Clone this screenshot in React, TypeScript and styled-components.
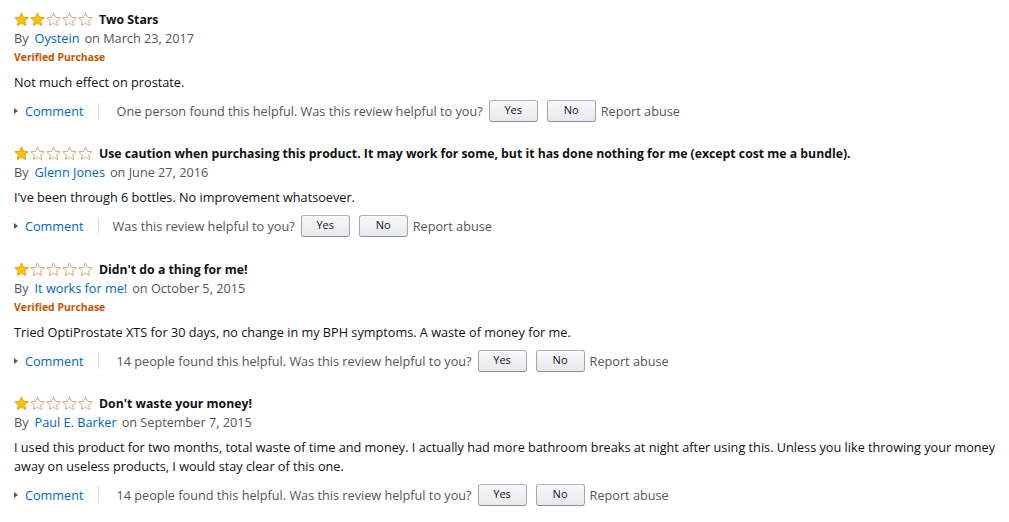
import React from "react";
import styled, { createGlobalStyle } from "styled-components";

const Global = createGlobalStyle`
  html, body { margin: 0; padding: 0; background: #fff; }
  body { font-family: "Open Sans", "Noto Sans", Arial, sans-serif; color: #111; font-size: 12.7px; }
`;

const Page = styled.div`
  padding: 10px 14px 0 14px;
  width: 990px;
`;

const Review = styled.div`
  margin-bottom: 22.3px;
`;

const Header = styled.div`
  display: flex;
  align-items: center;
  height: 19px;
`;

const Stars = styled.div`
  display: flex;
  gap: 1px;
  margin-right: 6px;
`;

const Title = styled.span`
  font-weight: 700;
  font-size: 12.25px;
  color: #111;
`;

const ByLine = styled.div`
  line-height: 19px;
  height: 19px;
  color: #555;
`;

const Author = styled.a`
  color: #0066c0;
  text-decoration: none;
  margin: 0 5px 0 6px;
`;

const Verified = styled.div`
  color: #c45500;
  font-weight: 700;
  font-size: 10.4px;
  line-height: 19px;
  height: 19px;
`;

const Body = styled.p`
  margin: 6px 0 0 0;
  line-height: 19px;
  color: #111;
`;

const Actions = styled.div`
  display: flex;
  align-items: center;
  height: 22px;
  margin-top: 8px;
  color: #555;
`;

const CommentLink = styled.a`
  display: flex;
  align-items: center;
  color: #0066c0;
  text-decoration: none;
`;

const Caret = styled.span`
  width: 0;
  height: 0;
  border-top: 3.5px solid transparent;
  border-bottom: 3.5px solid transparent;
  border-left: 4px solid #555;
  margin: 0 7px 0 0;
`;

const Sep = styled.span<{ $right: number }>`
  width: 1px;
  height: 17px;
  background: #ddd;
  margin: 0 ${(p) => p.$right}px 0 14px;
`;

const Button = styled.button<{ $ml: number }>`
  width: 49px;
  height: 22px;
  margin-left: ${(p) => p.$ml}px;
  border: 1px solid #adb1b8;
  border-color: #adb1b8 #a2a6ac #8d9096;
  border-radius: 3px;
  background: linear-gradient(to bottom, #f7f8fa, #e7e9ec);
  font-family: "Open Sans", "Noto Sans", Arial, sans-serif;
  font-size: 11px;
  line-height: 18px;
  color: #111;
  padding: 0 0 2px 0;
  box-shadow: 0 1px 0 rgba(255, 255, 255, 0.6) inset;
`;

const Report = styled.span`
  margin-left: 5px;
  color: #555;
`;

const Star: React.FC<{ filled: boolean }> = ({ filled }) => (
  <svg width="15" height="15" viewBox="0 0 24 24">
    <path
      d="M12 1.5l3.1 7 7.6.7-5.75 5 1.75 7.45L12 17.75 5.3 21.65l1.75-7.45L1.3 9.2l7.6-.7z"
      fill={filled ? "#ffc400" : "#fff"}
      stroke={filled ? "#e39400" : "#c8a46e"}
      strokeWidth="1.4"
      strokeLinejoin="round"
    />
  </svg>
);

type R = {
  stars: number;
  title: string;
  author: string;
  date: string;
  verified: boolean;
  body: string;
  helpful: string;
  sepRight: number;
};

const reviews: R[] = [
  {
    stars: 2,
    title: "Two Stars",
    author: "Oystein",
    date: "March 23, 2017",
    verified: true,
    body: "Not much effect on prostate.",
    helpful: "One person found this helpful. Was this review helpful to you?",
    sepRight: 18,
  },
  {
    stars: 1,
    title:
      "Use caution when purchasing this product. It may work for some, but it has done nothing for me (except cost me a bundle).",
    author: "Glenn Jones",
    date: "June 27, 2016",
    verified: false,
    body: "I've been through 6 bottles. No improvement whatsoever.",
    helpful: "Was this review helpful to you?",
    sepRight: 14,
  },
  {
    stars: 1,
    title: "Didn't do a thing for me!",
    author: "It works for me!",
    date: "October 5, 2015",
    verified: true,
    body: "Tried OptiProstate XTS for 30 days, no change in my BPH symptoms. A waste of money for me.",
    helpful: "14 people found this helpful. Was this review helpful to you?",
    sepRight: 18,
  },
  {
    stars: 1,
    title: "Don't waste your money!",
    author: "Paul E. Barker",
    date: "September 7, 2015",
    verified: false,
    body:
      "I used this product for two months, total waste of time and money. I actually had more bathroom breaks at night after using this. Unless you like throwing your money away on useless products, I would stay clear of this one.",
    helpful: "14 people found this helpful. Was this review helpful to you?",
    sepRight: 18,
  },
];

export default function App() {
  return (
    <>
      <Global />
      <Page>
        {reviews.map((r, i) => (
          <Review key={i}>
            <Header>
              <Stars>
                {[0, 1, 2, 3, 4].map((k) => (
                  <Star key={k} filled={k < r.stars} />
                ))}
              </Stars>
              <Title>{r.title}</Title>
            </Header>
            <ByLine>
              By<Author href="#">{r.author}</Author>on {r.date}
            </ByLine>
            {r.verified && <Verified>Verified Purchase</Verified>}
            <Body>{r.body}</Body>
            <Actions>
              <CommentLink href="#">
                <Caret />
                Comment
              </CommentLink>
              <Sep $right={r.sepRight} />
              <span>{r.helpful}</span>
              <Button $ml={6}>Yes</Button>
              <Button $ml={9}>No</Button>
              <Report>Report abuse</Report>
            </Actions>
          </Review>
        ))}
      </Page>
    </>
  );
}
